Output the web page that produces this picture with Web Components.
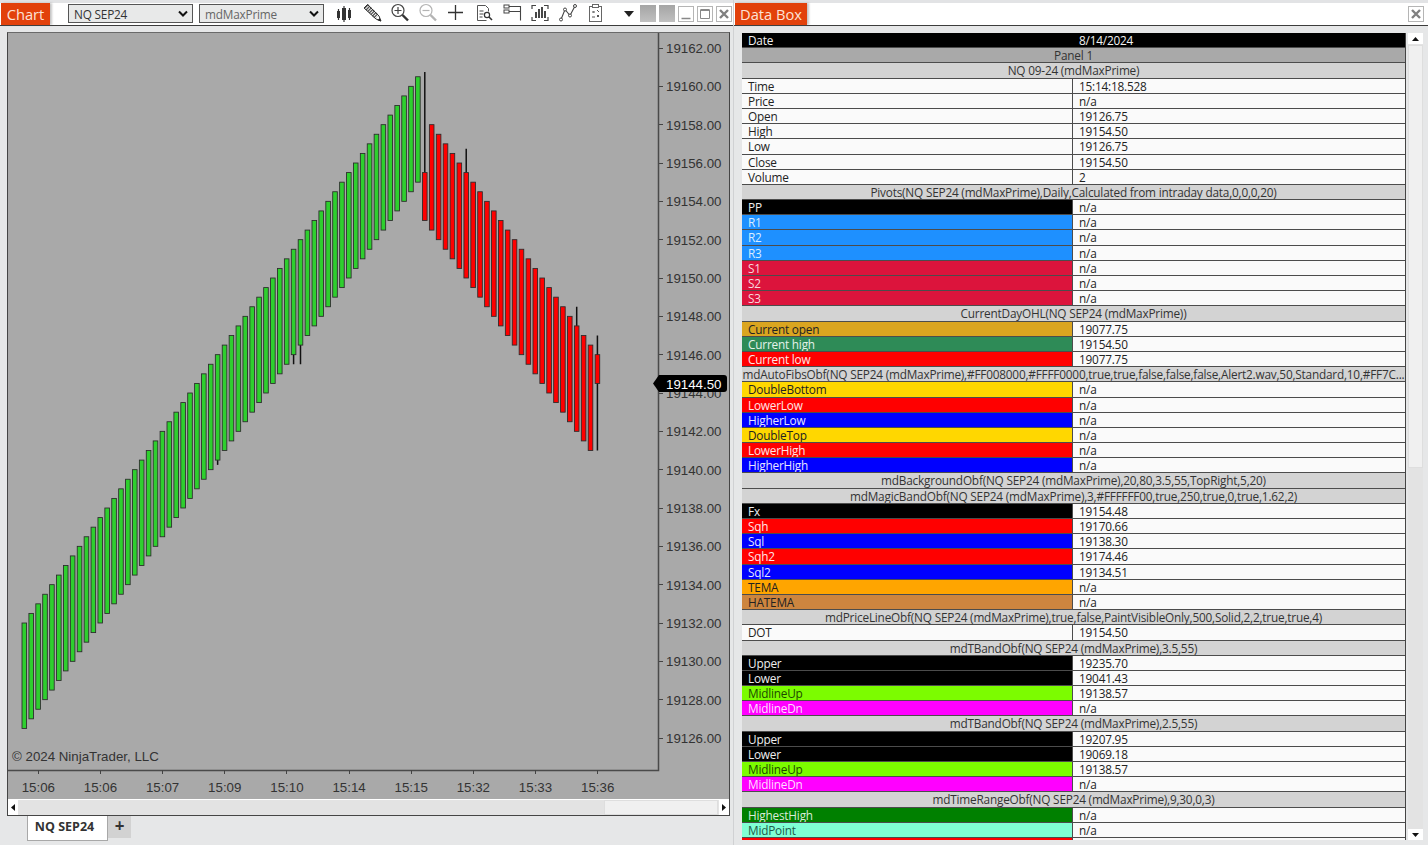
<!DOCTYPE html>
<html>
<head>
<meta charset="utf-8">
<title>Chart</title>
<style>
  html, body { margin: 0; padding: 0; background: #e6e7e8; overflow: hidden; }
</style>
</head>
<body>
<nt-app>
  <nt-pane slot="left" style="width:733px">
    <nt-tab slot="tab" tabwidth="49" gap="18">Chart</nt-tab>
    <nt-chart-toolbar slot="tools"></nt-chart-toolbar>
    <nt-chart-panel></nt-chart-panel>
  </nt-pane>
  <nt-pane slot="right" style="width:694px">
    <nt-tab slot="tab" tabwidth="72" gap="1">Data Box</nt-tab>
    <nt-close slot="tools" style="margin-left:auto;margin-right:4px"></nt-close>
    <nt-data-box>
      <data-head bg="#000" fg="#f2f2f2" split>Date<span slot="v">8/14/2024</span></data-head>
      <data-head bg="#a9a9a9">Panel 1</data-head>
      <data-head>NQ 09-24 (mdMaxPrime)</data-head>
      <data-row>Time<span slot="v">15:14:18.528</span></data-row>
      <data-row>Price<span slot="v">n/a</span></data-row>
      <data-row>Open<span slot="v">19126.75</span></data-row>
      <data-row>High<span slot="v">19154.50</span></data-row>
      <data-row>Low<span slot="v">19126.75</span></data-row>
      <data-row>Close<span slot="v">19154.50</span></data-row>
      <data-row>Volume<span slot="v">2</span></data-row>
      <data-head>Pivots(NQ SEP24 (mdMaxPrime),Daily,Calculated from intraday data,0,0,0,20)</data-head>
      <data-row bg="#000" fg="#eee">PP<span slot="v">n/a</span></data-row>
      <data-row bg="#1e90ff" fg="#d8ecff">R1<span slot="v">n/a</span></data-row>
      <data-row bg="#1e90ff" fg="#d8ecff">R2<span slot="v">n/a</span></data-row>
      <data-row bg="#1e90ff" fg="#d8ecff">R3<span slot="v">n/a</span></data-row>
      <data-row bg="#dc143c" fg="#f8d8de">S1<span slot="v">n/a</span></data-row>
      <data-row bg="#dc143c" fg="#f8d8de">S2<span slot="v">n/a</span></data-row>
      <data-row bg="#dc143c" fg="#f8d8de">S3<span slot="v">n/a</span></data-row>
      <data-head>CurrentDayOHL(NQ SEP24 (mdMaxPrime))</data-head>
      <data-row bg="#daa520" fg="#222">Current open<span slot="v">19077.75</span></data-row>
      <data-row bg="#2e8b57" fg="#e4f2ea">Current high<span slot="v">19154.50</span></data-row>
      <data-row bg="#ff0000" fg="#ffe6e6">Current low<span slot="v">19077.75</span></data-row>
      <data-head>mdAutoFibsObf(NQ SEP24 (mdMaxPrime),#FF008000,#FFFF0000,true,true,false,false,false,Alert2.wav,50,Standard,10,#FF7C...</data-head>
      <data-row bg="#ffd700" fg="#222">DoubleBottom<span slot="v">n/a</span></data-row>
      <data-row bg="#ff0000" fg="#ffe6e6">LowerLow<span slot="v">n/a</span></data-row>
      <data-row bg="#0000ff" fg="#e6e6ff">HigherLow<span slot="v">n/a</span></data-row>
      <data-row bg="#ffd700" fg="#222">DoubleTop<span slot="v">n/a</span></data-row>
      <data-row bg="#ff0000" fg="#ffe6e6">LowerHigh<span slot="v">n/a</span></data-row>
      <data-row bg="#0000ff" fg="#e6e6ff">HigherHigh<span slot="v">n/a</span></data-row>
      <data-head>mdBackgroundObf(NQ SEP24 (mdMaxPrime),20,80,3.5,55,TopRight,5,20)</data-head>
      <data-head>mdMagicBandObf(NQ SEP24 (mdMaxPrime),3,#FFFFFF00,true,250,true,0,true,1.62,2)</data-head>
      <data-row bg="#000" fg="#eee">Fx<span slot="v">19154.48</span></data-row>
      <data-row bg="#ff0000" fg="#ffe6e6">Sqh<span slot="v">19170.66</span></data-row>
      <data-row bg="#0000ff" fg="#e6e6ff">Sql<span slot="v">19138.30</span></data-row>
      <data-row bg="#ff0000" fg="#ffe6e6">Sqh2<span slot="v">19174.46</span></data-row>
      <data-row bg="#0000ff" fg="#e6e6ff">Sql2<span slot="v">19134.51</span></data-row>
      <data-row bg="#ffa500" fg="#222">TEMA<span slot="v">n/a</span></data-row>
      <data-row bg="#cd853f" fg="#222">HATEMA<span slot="v">n/a</span></data-row>
      <data-head>mdPriceLineObf(NQ SEP24 (mdMaxPrime),true,false,PaintVisibleOnly,500,Solid,2,2,true,true,4)</data-head>
      <data-row>DOT<span slot="v">19154.50</span></data-row>
      <data-head>mdTBandObf(NQ SEP24 (mdMaxPrime),3.5,55)</data-head>
      <data-row bg="#000" fg="#eee">Upper<span slot="v">19235.70</span></data-row>
      <data-row bg="#000" fg="#eee">Lower<span slot="v">19041.43</span></data-row>
      <data-row bg="#7cfc00" fg="#1c4a00">MidlineUp<span slot="v">19138.57</span></data-row>
      <data-row bg="#ff00ff" fg="#ffdcff">MidlineDn<span slot="v">n/a</span></data-row>
      <data-head>mdTBandObf(NQ SEP24 (mdMaxPrime),2.5,55)</data-head>
      <data-row bg="#000" fg="#eee">Upper<span slot="v">19207.95</span></data-row>
      <data-row bg="#000" fg="#eee">Lower<span slot="v">19069.18</span></data-row>
      <data-row bg="#7cfc00" fg="#1c4a00">MidlineUp<span slot="v">19138.57</span></data-row>
      <data-row bg="#ff00ff" fg="#ffdcff">MidlineDn<span slot="v">n/a</span></data-row>
      <data-head>mdTimeRangeObf(NQ SEP24 (mdMaxPrime),9,30,0,3)</data-head>
      <data-row bg="#008000" fg="#d8ecd8">HighestHigh<span slot="v">n/a</span></data-row>
      <data-row bg="#7fffd4" fg="#1e5a48">MidPoint<span slot="v">n/a</span></data-row>
      <data-row bg="#ff0000"></data-row>
    </nt-data-box>
  </nt-pane>
</nt-app>

<script>
"use strict";

const UI_FONT = '"Open Sans", "Noto Sans", sans-serif';

class NtApp extends HTMLElement {
  constructor() {
    super();
    this.attachShadow({ mode: "open" }).innerHTML = `
      <style>
        :host { display: flex; width: 1428px; height: 845px; overflow: hidden; background: #e6e7e8; font-family: ${UI_FONT}; }
        .divider { width: 1px; background: #d0d1d3; }
      </style>
      <slot name="left"></slot>
      <div class="divider"></div>
      <slot name="right"></slot>
    `;
  }
}

// one window: tab strip on top, content below
class NtPane extends HTMLElement {
  constructor() {
    super();
    this.attachShadow({ mode: "open" }).innerHTML = `
      <style>
        :host { display: flex; flex-direction: column; height: 845px; box-sizing: border-box; }
        .strip { height: 3px; background: #e2e3e5; }
        .bar { display: flex; align-items: stretch; height: 22px; background: #fff; border-bottom: 1px solid #3c3c3c; }
      </style>
      <div class="strip"></div>
      <div class="bar"><slot name="tab"></slot><slot name="tools"></slot></div>
      <slot></slot>
    `;
  }
}

class NtTab extends HTMLElement {
  constructor() {
    super();
    this.attachShadow({ mode: "open" }).innerHTML = `
      <style>
        :host { display: flex; flex: none; align-items: center; justify-content: center; box-sizing: border-box; margin-left: 1px; background: #e2410b; color: #fde3d6; font-size: 14.700px; box-shadow: 2px 0 2px rgba(90,90,90,.35); }
      </style>
      <slot></slot>
    `;
  }
  connectedCallback() {
    this.style.width = this.getAttribute("tabwidth") + "px";
    this.style.marginRight = this.getAttribute("gap") + "px";
  }
}

class NtSelect extends HTMLElement {
  constructor() {
    super();
    this.attachShadow({ mode: "open" }).innerHTML = `
      <style>
        :host { display: flex; flex: none; align-items: center; justify-content: space-between; box-sizing: border-box; width: 125px; height: 19px; margin-top: -1px; padding: 0 4px 0 5px; background: #e8e9e9; border: 1px solid #555; font-size: 11.800px; letter-spacing: -.2px; }
      </style>
      <slot></slot>
      <svg width="10" height="7" viewBox="0 0 10 7"><path d="M1 1.500 5 5.500 9 1.500" fill="none" stroke="#111" stroke-width="2"/></svg>
    `;
  }
}

const TOOL_ICONS = [
  // candles
  `<path d="M4.500 6v11M10 3v16M15.500 5v12" stroke="#333" stroke-width="1.200"/><rect x="3" y="8" width="3" height="7" fill="#333"/><rect x="8" y="5" width="4" height="12" fill="#333"/><rect x="14" y="7" width="3" height="8" fill="#333"/>`,
  // pencil
  `<path d="M4 3 15 14" stroke="#555" stroke-width="5.500" stroke-dasharray="1.300 .9"/><path d="M2 5 5.500 1.500 17 13l2 5-5-2Z" fill="none" stroke="#333" stroke-width="1"/><path d="M15.500 17.200 19 18.600l-1.300-3.600Z" fill="#222"/>`,
  // zoom in
  `<circle cx="8" cy="7.500" r="6" fill="none" stroke="#444" stroke-width="1.200"/><path d="M8 4v7M4.500 7.500h7" stroke="#444" stroke-width="1.200"/><path d="M12.500 12 18 17.500" stroke="#333" stroke-width="2.400"/>`,
  // zoom out, disabled
  `<circle cx="8" cy="7.500" r="6" fill="none" stroke="#b4b4b4" stroke-width="1.200"/><path d="M4.500 7.500h7" stroke="#b4b4b4" stroke-width="1.200"/><path d="M12.500 12 18 17.500" stroke="#b4b4b4" stroke-width="2.400"/>`,
  // crosshair
  `<path d="M9.500 2v15M2 9.500h15" stroke="#333" stroke-width="1.300"/>`,
  // doc search
  `<path d="M3.500 2.500h8l3 3v3M3.500 2.500v15h9" fill="none" stroke="#555" stroke-width="1"/><path d="M5.500 8h4M5.500 11h4M5.500 14h3" stroke="#444" stroke-width="1"/><circle cx="13" cy="12" r="2.600" fill="none" stroke="#333" stroke-width="1.200"/><path d="M15 14l3 3" stroke="#333" stroke-width="1.600"/>`,
  // flag / range
  `<path d="M2 3.500h16.500v14M2 8.500h16.500" fill="none" stroke="#444" stroke-width="1.100"/><rect x="2" y="2" width="5" height="3" fill="#fff" stroke="#444"/><rect x="2" y="7" width="5" height="3" fill="#fff" stroke="#444"/>`,
  // bars in brackets
  `<path d="M2 6V2.500h4M14 2.500h4V6M2 14v3.500h4M14 17.500h4V14" fill="none" stroke="#444" stroke-width="1.200"/><path d="M6 9v6M9 6v9M12 4v11M15 8v7" stroke="#333" stroke-width="1.800"/>`,
  // line with points
  `<path d="M3 16.500 7 6.500l5 6 5-9.500" fill="none" stroke="#444" stroke-width="1.100"/><circle cx="3" cy="16.500" r="1.500" fill="#fff" stroke="#444"/><circle cx="7" cy="6.500" r="1.500" fill="#fff" stroke="#444"/><circle cx="12" cy="12.500" r="1.500" fill="#fff" stroke="#444"/><circle cx="17" cy="3" r="1.500" fill="#fff" stroke="#444"/>`,
  // doc with marks
  `<rect x="3.500" y="3.500" width="12" height="15" fill="none" stroke="#666" stroke-width="1"/><rect x="6.500" y="1.500" width="6" height="3" fill="#fff" stroke="#666"/><path d="M6.500 8l2 2M8.500 8l-2 2M11 12l2 2M13 12l-2 2M11 7l2 2M6 14h3" stroke="#555" stroke-width="1"/>`
];

class NtChartToolbar extends HTMLElement {
  constructor() {
    super();
    const icons = TOOL_ICONS.map(p => `<svg class="tool" width="20" height="20" viewBox="0 0 20 20">${p}</svg>`).join("");
    this.attachShadow({ mode: "open" }).innerHTML = `
      <style>
        :host { display: flex; align-items: center; flex: 1; min-width: 0; }
        .selects { display: flex; flex: none; gap: 6px; width: 263px; }
        .tools { display: flex; flex: none; align-items: center; margin-top: -2px; gap: 8px; width: 284px; padding-left: 3px; box-sizing: border-box; }
        .caret { flex: none; margin-left: 9px; margin-right: 6px; }
        .sq { flex: none; width: 16px; height: 17px; background: linear-gradient(#a5a5a5, #c0c0c0); margin-right: 3px; margin-top: -1px; }
        .win { flex: none; width: 14px; height: 14px; border: 1px solid #b5b5b5; margin-right: 3px; margin-top: -1px; display: flex; }
        .win svg { display: block; }
      </style>
      <div class="selects">
        <nt-select style="color:#333">NQ SEP24</nt-select>
        <nt-select style="color:#666">mdMaxPrime</nt-select>
      </div>
      <div class="tools">${icons}</div>
      <svg class="caret" width="10" height="6" viewBox="0 0 10 6"><path d="M0 0h10L5 6Z" fill="#222"/></svg>
      <div class="sq"></div>
      <div class="sq"></div>
      <div class="win"><svg width="14" height="14" viewBox="0 0 14 14"><path d="M2.500 11.500h9" stroke="#888" stroke-width="1.500"/></svg></div>
      <div class="win"><svg width="14" height="14" viewBox="0 0 14 14"><path d="M2.500 3h9v8.500h-9Z" fill="none" stroke="#888"/><path d="M2.500 3h9" stroke="#888" stroke-width="2"/></svg></div>
      <nt-close style="margin-top:-1px"></nt-close>
    `;
  }
}

class NtClose extends HTMLElement {
  constructor() {
    super();
    this.attachShadow({ mode: "open" }).innerHTML = `
      <style>
        :host { display: block; flex: none; align-self: center; width: 14px; height: 14px; border: 1px solid #b5b5b5; }
        svg { display: block; }
      </style>
      <svg width="14" height="14" viewBox="0 0 14 14"><path d="M3 3l8 8M11 3l-8 8" stroke="#808080" stroke-width="2.400"/></svg>
    `;
  }
}

class NtScrollbar extends HTMLElement {
  constructor() {
    super();
    this.attachShadow({ mode: "open" });
  }
  connectedCallback() {
    const vertical = this.getAttribute("dir") === "v";
    const a = vertical ? "M0 4 3.500 0 7 4Z" : "M4 0 0 3.500 4 7Z";
    const b = vertical ? "M0 0h7L3.500 4Z" : "M0 0 4 3.500 0 7Z";
    const box = vertical ? 'width="7" height="4" viewBox="0 0 7 4"' : 'width="4" height="7" viewBox="0 0 4 7"';
    this.shadowRoot.innerHTML = `
      <style>
        :host { display: flex; flex-direction: ${vertical ? "column" : "row"}; background: #e3e3e3; box-sizing: border-box; }
        .btn { display: flex; align-items: center; justify-content: center; background: #fff; flex: none; ${vertical ? "height: 11px;" : "width: 10px;"} }
        .rest { flex: 1; }
        .thumb { flex: none; background: #f0f0f0; border: 1px solid #dedede; box-sizing: border-box; ${vertical ? `height: ${this.getAttribute("thumb")}px; margin-top: 1px;` : `width: ${this.getAttribute("thumb")}px; margin-right: 1px;`} }
      </style>
      <div class="btn"><svg ${box}><path d="${a}" fill="#111"/></svg></div>
      ${vertical ? '<div class="thumb"></div><div class="rest"></div>' : '<div class="rest"></div><div class="thumb"></div>'}
      <div class="btn"><svg ${box}><path d="${b}" fill="#111"/></svg></div>
    `;
  }
}

class NtChart extends HTMLElement {
  constructor() {
    super();
    const y = p => 48 + (19162 - p) * 19.1667;
    const xAt = i => 24.3 + i * 6.905;
    const snap = v => Math.round(v - 0.5) + 0.5;

    // index -> both ends of the wick that sticks out of the body
    const wicks = { 28: [19140.5, 19140.25], 39: [19146, 19145.5], 40: [19146.5, 19145.5], 58: [19155.5, 19160.75], 64: [19155.5, 19156.75], 80: [19147.5, 19148.5] };

    let bars = "";
    const bar = (i, top, bottom, fill) => {
      const cx = xAt(i);
      const w = wicks[i];
      if (w) bars += `<path d="M${cx} ${y(w[0])}V${y(w[1])}" stroke="#111" stroke-width="1.500"/>`;
      bars += `<rect x="${cx - 2.3}" y="${y(top)}" width="4.600" height="${y(bottom) - y(top)}" fill="${fill}" stroke="#2a2a2a" stroke-width=".85"/>`;
    };
    for (let i = 0; i < 58; i++) bar(i, 19132 + i * 0.5, 19126.5 + i * 0.5, "#2ecf2e");
    bar(58, 19155.5, 19153, "#ff0000");
    for (let i = 59; i < 83; i++) {
      const top = 19158 - (i - 59) * 0.5;
      bar(i, top, top - 5.5, "#ff0000");
    }
    const lastX = xAt(83);
    bars += `<path d="M${lastX} ${y(19147)}V${y(19141)}" stroke="#111" stroke-width="1.500"/>`;
    bars += `<rect x="${lastX - 2.3}" y="${y(19146)}" width="4.600" height="${y(19144.5) - y(19146)}" fill="#ff0000" stroke="#2a2a2a" stroke-width=".85"/>`;

    let prices = "";
    for (let p = 19126; p <= 19162; p += 2) {
      prices += `<path d="M659 ${snap(y(p))}h4" stroke="#444"/><text x="666" y="${y(p) + 5}">${p}.00</text>`;
    }
    const times = ["15:06", "15:06", "15:07", "15:09", "15:10", "15:14", "15:15", "15:32", "15:33", "15:36"];
    let stamps = "";
    times.forEach((t, n) => {
      const cx = 38.3 + n * 62.15;
      stamps += `<path d="M${snap(cx)} 770v4" stroke="#444"/><text x="${cx}" y="792" text-anchor="middle">${t}</text>`;
    });

    this.attachShadow({ mode: "open" }).innerHTML = `
      <style>
        :host { display: block; height: 767px; }
        svg { display: block; }
        text { font: 13.300px "Liberation Sans", Arial, sans-serif; fill: #333; }
        .mark { fill: #fff; }
      </style>
      <svg width="721" height="767" viewBox="8 33 721 767">
        <rect x="8" y="33" width="721" height="767" fill="#a9a9a9"/>
        <path d="M8 799.500h721" stroke="#fff"/>
        <path d="M658.500 33v737.500H8" fill="none" stroke="#4a4a4a" stroke-width="1.500"/>
        ${bars}
        ${prices}
        ${stamps}
        <text x="12" y="761">© 2024 NinjaTrader, LLC</text>
        <path d="M653 383.500 659 375h65q3 0 3 3v11q0 3-3 3h-65Z" fill="#000"/>
        <text class="mark" x="666" y="388.500">19144.50</text>
      </svg>
    `;
  }
}

class NtChartPanel extends HTMLElement {
  constructor() {
    super();
    this.attachShadow({ mode: "open" }).innerHTML = `
      <style>
        :host { display: block; flex: 1; padding: 6px 0 0 7px; }
        .frame { width: 723px; box-sizing: border-box; border: 1px solid #454545; border-top-color: #6a6a6a; }
        .tabs { display: flex; align-items: flex-start; padding-left: 20px; }
        .tab { width: 81px; height: 25px; box-sizing: border-box; padding-right: 6px; background: #fff; border: 1px solid #a8a8a8; border-top: 0; font-weight: 700; font-size: 12.500px; color: #333; text-align: center; line-height: 21px; }
        .plus { width: 23px; height: 22px; background: #d2d2d2; color: #333; font-size: 17px; font-weight: 700; text-align: center; line-height: 19px; }
      </style>
      <div class="frame">
        <nt-chart></nt-chart>
        <nt-scrollbar thumb="114" style="height:15px"></nt-scrollbar>
      </div>
      <div class="tabs"><div class="tab">NQ SEP24</div><div class="plus">+</div></div>
    `;
  }
}

class NtDataBox extends HTMLElement {
  constructor() {
    super();
    this.attachShadow({ mode: "open" }).innerHTML = `
      <style>
        :host { display: flex; gap: 2px; padding: 7px 0 0 8px; height: 807px; font-size: 11.800px; letter-spacing: -.2px; color: #222; }
        .table { width: 664px; height: 807px; overflow: hidden; border-right: 1px solid #444; box-sizing: border-box; }
      </style>
      <div class="table"><slot></slot></div>
      <nt-scrollbar dir="v" thumb="423" style="width:15px"></nt-scrollbar>
    `;
  }
}

class DataRow extends HTMLElement {
  constructor() {
    super();
    this.attachShadow({ mode: "open" }).innerHTML = `
      <style>
        :host { display: grid; grid-template-columns: 330px 1fr; height: 15.200px; line-height: 14.200px; box-sizing: border-box; white-space: nowrap; }
        div { box-sizing: border-box; overflow: hidden; border-bottom: 1px solid #4c4c4c; }
        .label { padding-left: 6px; }
        .value { padding-left: 6px; background: #fafafa; border-left: 1px solid #4c4c4c; }
      </style>
      <div class="label"><slot></slot></div>
      <div class="value"><slot name="v"></slot></div>
    `;
  }
  connectedCallback() {
    const label = this.shadowRoot.querySelector(".label");
    label.style.background = this.getAttribute("bg") || "#fafafa";
    label.style.color = this.getAttribute("fg") || "#222";
  }
}

class DataHead extends HTMLElement {
  constructor() {
    super();
    this.attachShadow({ mode: "open" }).innerHTML = `
      <style>
        :host { display: grid; height: 15.200px; line-height: 14.200px; box-sizing: border-box; white-space: nowrap; border-bottom: 1px solid #4c4c4c; background: #d3d3d3; color: #333; }
        :host([split]) { grid-template-columns: 330px 1fr; }
        :host(:not([split])) { text-align: center; }
        .label { overflow: hidden; }
        :host([split]) .label { padding-left: 6px; }
        :host([split]) .value { padding-left: 7px; }
      </style>
      <div class="label"><slot></slot></div>
      <div class="value"><slot name="v"></slot></div>
    `;
  }
  connectedCallback() {
    if (this.hasAttribute("bg")) this.style.background = this.getAttribute("bg");
    if (this.hasAttribute("fg")) this.style.color = this.getAttribute("fg");
  }
}

window.customElements.define("nt-app", NtApp);
window.customElements.define("nt-pane", NtPane);
window.customElements.define("nt-tab", NtTab);
window.customElements.define("nt-select", NtSelect);
window.customElements.define("nt-close", NtClose);
window.customElements.define("nt-chart-toolbar", NtChartToolbar);
window.customElements.define("nt-scrollbar", NtScrollbar);
window.customElements.define("nt-chart", NtChart);
window.customElements.define("nt-chart-panel", NtChartPanel);
window.customElements.define("nt-data-box", NtDataBox);
window.customElements.define("data-row", DataRow);
window.customElements.define("data-head", DataHead);
</script>
</body>
</html>
